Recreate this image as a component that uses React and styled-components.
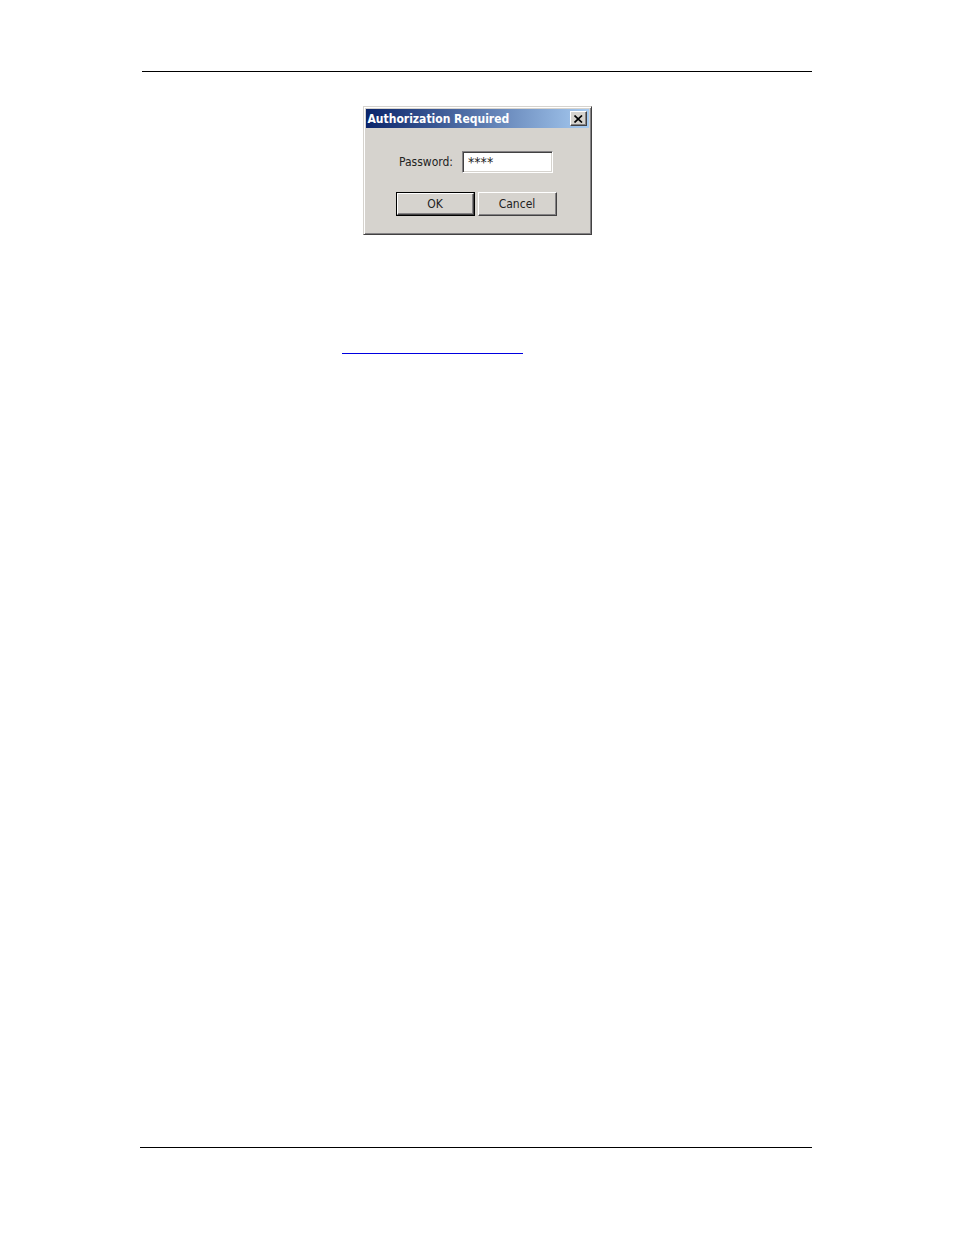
import React from 'react'
import styled, { createGlobalStyle } from 'styled-components'

const GlobalStyle = createGlobalStyle`
  * {
    box-sizing: border-box;
  }
  body {
    margin: 0;
    background: #fff;
    font-family: "DejaVu Sans Condensed", "DejaVu Sans", sans-serif;
  }
`

const Page = styled.div`
  display: flex;
  flex-direction: column;
  min-height: 100vh;
  padding: 71px 142px 87px;
`

const Rule = styled.hr`
  width: 100%;
  margin: 0;
  border: 0;
  border-top: 1px solid #000;
`

const FooterRule = styled.footer`
  margin-top: auto;
  margin-left: -2px;
  border-top: 1px solid #000;
`

const Main = styled.main`
  padding-top: 34px;
`

const Dialog = styled.form`
  width: 229px;
  margin: 0 auto;
  padding: 1px 2px 2px;
  border: 1px solid;
  border-color: #d6d3ce #424142 #424142 #d6d3ce;
  background: #d6d3ce;
  box-shadow: inset 1px 1px #fff, inset -1px -1px #848284;
`

const TitleBar = styled.div`
  display: flex;
  align-items: center;
  justify-content: space-between;
  height: 19px;
  margin-top: 1px;
  padding: 0 2px;
  background: linear-gradient(to right, #0a246a, #a6caf0);
`

const Title = styled.h1`
  margin: 0;
  color: #fff;
  font-size: 12px;
  font-weight: bold;
  line-height: 16px;
  white-space: nowrap;
`

const Raised = styled.button`
  display: flex;
  align-items: center;
  justify-content: center;
  padding: 0;
  border: 1px solid;
  border-color: #fff #424142 #424142 #fff;
  background: #d6d3ce;
  box-shadow: inset -1px -1px #848284;
  color: #222;
  font-family: inherit;
  font-size: 12px;
  line-height: 16px;
`

const CloseButton = styled(Raised)`
  width: 17px;
  height: 15px;
`

const PushButton = styled(Raised)`
  width: 79px;
  height: 24px;
  outline: ${props => (props.$primary ? '1px solid #000' : 'none')};
  outline-offset: -1px;
  border-width: ${props => (props.$primary ? '2px' : '1px')};
`

const Field = styled.div`
  display: flex;
  align-items: center;
  justify-content: center;
  gap: 9px;
  padding: 23px 2px 0 0;
`

const Label = styled.label`
  color: #222;
  font-size: 12px;
  line-height: 16px;
`

const PasswordInput = styled.input`
  width: 91px;
  height: 22px;
  padding: 0 5px;
  border: 1px solid;
  border-color: #848284 #fff #fff #848284;
  border-radius: 0;
  background: #fff;
  box-shadow: inset 1px 1px #424142, inset -1px -1px #d6d3ce;
  color: #222;
  font-family: inherit;
  font-size: 14px;
  outline: none;
`

const Buttons = styled.div`
  display: flex;
  justify-content: center;
  gap: 3px;
  padding: 19px 2px 16px 0;
`

const LinkRule = styled(Rule)`
  width: 181px;
  margin: 118px 0 0 200px;
  border-top-color: #0000e0;
`

function App() {
  return (
    <>
      <GlobalStyle />
      <Page>
        <Rule />
        <Main>
          <Dialog aria-labelledby="dialog-title" onSubmit={e => e.preventDefault()}>
            <TitleBar>
              <Title id="dialog-title">Authorization Required</Title>
              <CloseButton type="button" aria-label="Close">
                <svg width="9" height="8" viewBox="0 0 9 8" aria-hidden="true">
                  <path d="M0.5 0.5 L8 7.5 M8 0.5 L0.5 7.5" stroke="#000" strokeWidth="1.7" />
                </svg>
              </CloseButton>
            </TitleBar>
            <Field>
              <Label htmlFor="password">Password:</Label>
              <PasswordInput id="password" type="text" defaultValue="****" autoComplete="off" />
            </Field>
            <Buttons>
              <PushButton type="submit" $primary>OK</PushButton>
              <PushButton type="button">Cancel</PushButton>
            </Buttons>
          </Dialog>
          <LinkRule />
        </Main>
        <FooterRule />
      </Page>
    </>
  )
}

export default App
